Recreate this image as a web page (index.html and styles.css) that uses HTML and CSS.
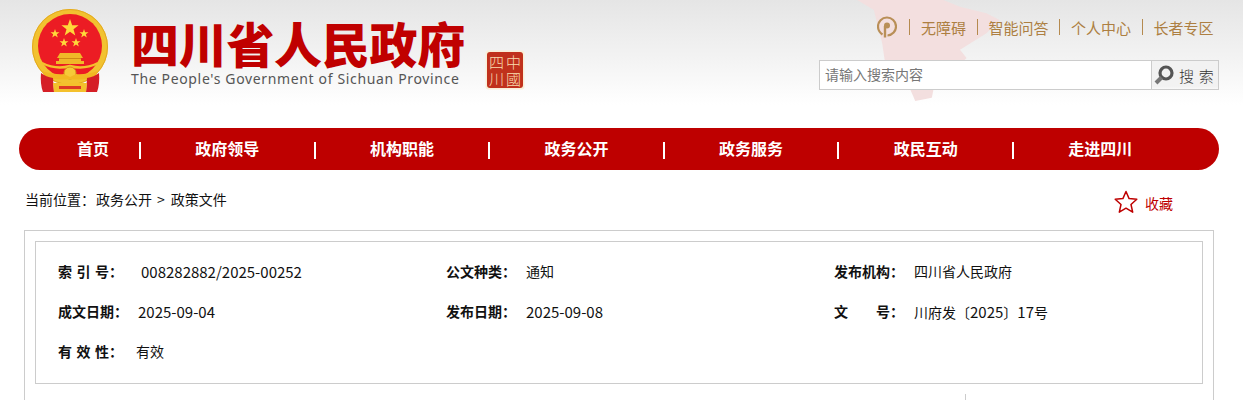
FILE: index.html
```html
<!DOCTYPE html>
<html lang="zh-CN">
<head>
<meta charset="utf-8">
<title>四川省人民政府</title>
<link rel="stylesheet" href="styles.css">
</head>
<body>
<header class="header">
  <svg class="map" viewBox="0 0 430 320" aria-hidden="true"><path d="M0 0 L50 30 L75 130 L90 230 L160 270 L175 305 L225 295 L230 270 L330 175 L310 150 L390 100 L430 60 L390 40 L310 20 L260 0Z"/></svg>
  <svg class="emblem" viewBox="32 9 76 83" aria-hidden="true">
    <circle cx="70" cy="47" r="38" fill="#f2c230"/>
    <circle cx="70" cy="47" r="37.5" fill="none" stroke="#e3a91f" stroke-width="1"/>
    <circle cx="70" cy="46" r="32" fill="#ec1c24"/>
    <polygon fill="#ffd83a" points="70,19 72.2,25.3 78.6,25.3 73.5,29.2 75.3,35.5 70,31.7 64.7,35.5 66.5,29.2 61.4,25.3 67.8,25.3"/>
    <polygon fill="#ffd83a" points="55,29 56.1,32.2 59.5,32.2 56.8,34.2 57.8,37.5 55,35.5 52.2,37.5 53.2,34.2 50.5,32.2 53.9,32.2"/>
    <polygon fill="#ffd83a" points="84,29 85.1,32.2 88.5,32.2 85.8,34.2 86.8,37.5 84,35.5 81.2,37.5 82.2,34.2 79.5,32.2 82.9,32.2"/>
    <polygon fill="#ffd83a" points="64,38 65.1,41.2 68.5,41.2 65.8,43.2 66.8,46.5 64,44.5 61.2,46.5 62.2,43.2 59.5,41.2 62.9,41.2"/>
    <polygon fill="#ffd83a" points="76,38 77.1,41.2 80.5,41.2 77.8,43.2 78.8,46.5 76,44.5 73.2,46.5 74.2,43.2 71.5,41.2 74.9,41.2"/>
    <path fill="#f0b828" d="M60 53 H80 L83 58 H81 V61 H84 V64 H56 V61 H59 V58 H57Z"/>
    <path fill="#cf8a14" d="M59 58 H81 V59 H59Z"/>
    <path fill="none" stroke="#f4c02c" stroke-width="2.5" d="M42 63 Q56 70 70 66 Q84 70 98 63"/>
    <circle cx="70" cy="73" r="6" fill="#f6c938" stroke="#d9951a" stroke-width="1"/>
    <path fill="#f2b722" d="M42 71 Q56 75 64 74 L70 77 L76 74 Q84 75 98 71 L96 76 Q84 81 70 79 Q56 81 44 76Z"/>
    <path fill="#d51f26" d="M41 73 Q46 77 53 78 L54 92 H43 Q40 84 41 73Z M99 73 Q94 77 87 78 L86 92 H97 Q100 84 99 73Z"/>
    <path fill="#f4c02c" d="M53 83 H87 L86 92 H54Z"/>
    <path fill="#dd3a24" d="M59 86 H81 V89 H59Z"/>
  </svg>
  <div class="brand">
    <div class="brand-cn">四川省人民政府</div>
    <div class="brand-en">The People's Government of Sichuan Province</div>
  </div>
  <svg class="seal" viewBox="0 0 40 40">
    <rect x="0.5" y="0.5" width="39" height="39" rx="3" fill="#f9efd8"/>
    <rect x="2" y="2" width="36" height="36" rx="3" fill="#c0311c"/>
    <text class="seal-char" x="28.5" y="18" text-anchor="middle">中</text>
    <text class="seal-char" x="28.5" y="35" text-anchor="middle">國</text>
    <text class="seal-char" x="11.5" y="18" text-anchor="middle">四</text>
    <text class="seal-char" x="11.5" y="35" text-anchor="middle">川</text>
  </svg>
  <div class="tools">
    <div class="links">
      <svg class="pin" viewBox="0 0 20 24" aria-hidden="true"><path d="M5.5 19.5 C2.5 17.5 1 15 1 11.5 A9 9 0 1 1 10.5 20.5" fill="none" stroke="#b98f57" stroke-width="2.2"/><path d="M8 22.5 V11" stroke="#b98f57" stroke-width="2.4"/><circle cx="10" cy="10.5" r="3" fill="#b98f57"/></svg>
      <span class="sep"></span><a class="link">无障碍</a>
      <span class="sep"></span><a class="link">智能问答</a>
      <span class="sep"></span><a class="link">个人中心</a>
      <span class="sep"></span><a class="link">长者专区</a>
    </div>
    <div class="search">
      <div class="search-input">请输入搜索内容</div>
      <div class="search-btn">
        <svg class="search-ico" viewBox="0 0 20 20" aria-hidden="true"><circle cx="12" cy="8" r="6" fill="none" stroke="#555" stroke-width="3.2"/><path d="M7.5 12.5 L2 18" stroke="#777" stroke-width="4"/></svg>
        <span class="search-label">搜 索</span>
      </div>
    </div>
  </div>
</header>

<nav class="nav">
  <a class="nav-item nav-first">首页</a>
  <a class="nav-item">政府领导</a>
  <a class="nav-item">机构职能</a>
  <a class="nav-item">政务公开</a>
  <a class="nav-item">政务服务</a>
  <a class="nav-item">政民互动</a>
  <a class="nav-item nav-last">走进四川</a>
</nav>

<div class="crumbbar">
  <div class="crumb"><span class="crumb-lead">当前位置：</span>政务公开<span class="crumb-arrow">&gt;</span>政策文件</div>
  <div class="fav">
    <svg class="star" viewBox="0 0 24 24" aria-hidden="true"><polygon points="12,1.5 15.1,8.6 22.8,9.3 17,14.5 18.7,22.2 12,18.2 5.3,22.2 7,14.5 1.2,9.3 8.9,8.6" fill="none" stroke="#be0000" stroke-width="1.5" stroke-linejoin="round"/></svg>
    <span class="fav-label">收藏</span>
  </div>
</div>

<main class="outer">
  <section class="meta">
    <div class="cell"><b class="label label-spaced">索 引 号：</b><span class="val val-index num">008282882/2025-00252</span></div>
    <div class="cell"><b class="label">公文种类：</b><span class="val">通知</span></div>
    <div class="cell"><b class="label">发布机构：</b><span class="val">四川省人民政府</span></div>
    <div class="cell"><b class="label">成文日期：</b><span class="val num">2025-09-04</span></div>
    <div class="cell"><b class="label">发布日期：</b><span class="val num">2025-09-08</span></div>
    <div class="cell"><b class="label label-wen"><i class="wen">文</i>号：</b><span class="val">川府发〔<span class="num">2025</span>〕<span class="num">17</span>号</span></div>
    <div class="cell"><b class="label label-spaced label-short">有 效 性：</b><span class="val">有效</span></div>
  </section>
  <div class="tick"></div>
</main>
</body>
</html>
```

FILE: styles.css
```css
* { box-sizing: border-box; }
html, body { margin: 0; padding: 0; }
body {
  width: 1243px;
  height: 400px;
  overflow: hidden;
  background: #fff;
  color: #111;
  font-family: "Noto Sans CJK SC", "Noto Sans", sans-serif;
  font-size: 14px;
}
a { color: inherit; text-decoration: none; }

.header {
  position: relative;
  display: flex;
  height: 105px;
  padding-left: 32px;
  background: linear-gradient(#e5e5e5, #f4f4f4 60%, #fff);
}
.map {
  position: absolute;
  left: 857px;
  top: 0;
  width: 143px;
  height: 106px;
  fill: #f3dfdf;
}
.emblem {
  width: 76px;
  height: 83px;
  margin-top: 9px;
  flex: none;
  position: relative;
}
.brand { margin-left: 23px; width: 354px; flex: none; position: relative; }
.brand-cn {
  margin-top: 18px;
  height: 48px;
  color: #c00000;
  font-size: 48px;
  line-height: 48px;
  font-weight: 900;
  letter-spacing: -0.3px;
  white-space: nowrap;
}
.brand-en {
  margin-top: 3px;
  color: #555;
  font-size: 14px;
  line-height: 20px;
  letter-spacing: 0.65px;
  font-family: "Noto Sans", sans-serif;
  white-space: nowrap;
}
.seal { width: 40px; height: 40px; margin-top: 50px; flex: none; position: relative; }
.seal-char { font-size: 15px; fill: #f8dcae; font-family: "Noto Sans CJK TC", sans-serif; font-weight: 300; }

.tools {
  position: relative;
  margin-left: 294px;
  width: 400px;
  flex: none;
}
.links {
  display: flex;
  align-items: center;
  height: 24px;
  margin-top: 15px;
  color: #ad7f42;
  font-size: 15px;
}
.pin { width: 20px; height: 24px; margin-left: 58px; flex: none; }
.sep { width: 1px; height: 16px; background: #b58a4f; margin: 0 10.75px; flex: none; }
.pin + .sep { margin: 0 11px 0 12px; }
.link { white-space: nowrap; }

.search {
  display: flex;
  width: 400px;
  height: 30px;
  margin-top: 21px;
  border: 1px solid #ccc;
  background: #fff;
}
.search-input {
  flex: 1;
  padding-left: 5px;
  color: #777;
  font-size: 14px;
  line-height: 27px;
}
.search-btn {
  display: flex;
  align-items: center;
  width: 67px;
  height: 28px;
  padding-left: 2px;
  gap: 5px;
  background: linear-gradient(#f2f2f2 90%, #f9f9f9);
  border-left: 1px solid #ccc;
  color: #333;
  font-size: 15px;
}
.search-label { word-spacing: 1.5px; font-weight: 300; white-space: nowrap; }
.search-ico { width: 20px; height: 20px; flex: none; }

.nav {
  display: flex;
  width: 1200px;
  height: 42px;
  margin: 23px 0 0 19px;
  border-radius: 21px;
  background: #be0000;
  color: #fff;
  font-size: 16px;
  font-weight: 700;
  line-height: 40px;
}
.nav-item {
  position: relative;
  width: 174.6px;
  text-align: center;
  flex: none;
}
.nav-item::after {
  content: "";
  position: absolute;
  right: -1px;
  top: 14px;
  width: 2px;
  height: 17px;
  background: #fff;
}
.nav-first { width: 121px; padding-left: 58px; text-align: left; }
.nav-last::after { display: none; }

.crumbbar {
  display: flex;
  justify-content: space-between;
  height: 60px;
  padding: 19px 70px 0 25px;
}
.crumb { color: #111; font-size: 14px; line-height: 20px; }
.crumb-lead { margin-right: 1px; }
.crumb-arrow { margin: 0 6px 0 5px; }
.fav {
  display: flex;
  align-items: center;
  gap: 7px;
  height: 24px;
  margin-top: 2px;
  color: #be0000;
  font-size: 14px;
  line-height: 24px;
}
.star { width: 24px; height: 24px; flex: none; margin: -2px 0 0 -1px; }

.outer {
  position: relative;
  width: 1190px;
  height: 300px;
  margin-left: 24px;
  padding: 10px 10px 10px 10px;
  border: 1px solid #ccc;
}
.meta {
  display: grid;
  grid-template-columns: repeat(3, 388px);
  grid-auto-rows: 40px;
  height: 143px;
  padding: 9px 0 0 22px;
  border: 1px solid #ccc;
}
.cell { display: flex; align-items: center; white-space: nowrap; }
.label { width: 80px; flex: none; font-weight: 700; }
.label-spaced { word-spacing: 1.3px; }
.label-short { width: 78px; }
.label-wen { display: flex; }
.wen { font-style: normal; width: 42px; }
.num { font-size: 15px; }
.val-index { margin-left: 3px; }
.tick {
  position: absolute;
  left: 940px;
  top: 163px;
  width: 1px;
  height: 30px;
  background: #ccc;
}
```
